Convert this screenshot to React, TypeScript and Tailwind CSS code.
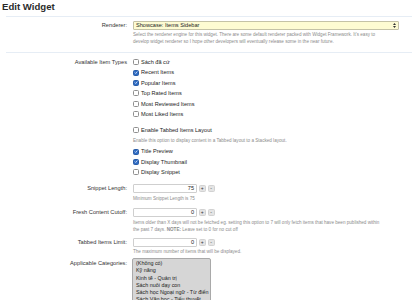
import React from "react";

const font = { fontFamily: '"Liberation Sans", Arial, sans-serif' };

function Box({ checked }: { checked?: boolean }) {
  return checked ? (
    <span className="w-[6px] h-[6px] rounded-[1.5px] bg-[#2f6cc4] border border-[#2a5ca6] flex items-center justify-center shrink-0">
      <svg width="5" height="5" viewBox="0 0 10 10">
        <path d="M2 5.2 L4.2 7.4 L8.2 2.6" stroke="white" strokeWidth="1.8" fill="none" />
      </svg>
    </span>
  ) : (
    <span className="w-[6px] h-[6px] rounded-[1.5px] bg-white border border-[#8f8f8f] shrink-0" />
  );
}

function CheckRow({ label, checked }: { label: string; checked?: boolean }) {
  return (
    <div className="h-[10.4px] flex items-center gap-[2px] text-[5.6px] text-[#222]">
      <Box checked={checked} />
      <span>{label}</span>
    </div>
  );
}

function Label({ children, className = "" }: { children: React.ReactNode; className?: string }) {
  return (
    <div className={"w-[127px] shrink-0 text-right text-[5.7px] text-[#333] " + className}>{children}</div>
  );
}

function Help({ children, className = "" }: { children: React.ReactNode; className?: string }) {
  return <div className={"text-[4.6px] leading-[7px] text-[#8c8c8c] " + className}>{children}</div>;
}

function Spin({ value }: { value: string }) {
  return (
    <div className="flex items-center gap-[2px]">
      <div className="w-[64px] h-[9px] bg-white border border-[#cfcfcf] rounded-[1px] flex items-center justify-end pr-[2px] text-[5.6px] text-[#222]">
        {value}
      </div>
      <div className="w-[6.5px] h-[7px] bg-[#e4e4e4] border border-[#d2d2d2] rounded-[1.5px] flex items-center justify-center text-[5px] leading-none text-[#333]">
        +
      </div>
      <div className="w-[7px] h-[7px] bg-[#e4e4e4] border border-[#d2d2d2] rounded-[1.5px] flex items-center justify-center text-[5px] leading-none text-[#333]">
        -
      </div>
    </div>
  );
}

export default function App() {
  return (
    <div className="w-[418px] h-[300px] overflow-hidden bg-white" style={font}>
      <div className="pl-[2px] pt-[1px] h-[12px] text-[9.6px] leading-[12px] font-bold text-[#2b2b2b]">Edit Widget</div>
      <div className="mt-[4px] mx-[6px] h-px bg-[#e6edf5]" />

      {/* Renderer */}
      <div className="mt-[4px] flex">
        <Label className="leading-[9px]">Renderer:</Label>
        <div className="ml-[6px] w-[266px]">
          <div className="h-[8.5px] bg-[#fdfbd2] border border-[#c4c2a6] rounded-[1px] flex items-center justify-between pl-[2px] pr-[2px] text-[5.6px] text-[#222]">
            <span>Showcase: Items Sidebar</span>
            <svg width="3" height="5" viewBox="0 0 6 10">
              <path d="M0 4 L3 0 L6 4 Z M0 6 L3 10 L6 6 Z" fill="#333" />
            </svg>
          </div>
          <Help className="mt-[1px]">
            Select the renderer engine for this widget. There are some default renderer packed with Widget Framework. It's easy to
            <br />
            develop widget renderer so I hope other developers will eventually release some in the near future.
          </Help>
        </div>
      </div>
      <div className="mt-[7px] mx-[6px] h-px bg-[#e6edf5]" />

      {/* Item types */}
      <div className="mt-[4.5px] flex">
        <Label className="leading-[10.4px]">Available Item Types</Label>
        <div className="ml-[6px]">
          <CheckRow label="Sách đã cứ" />
          <CheckRow label="Recent Items" checked />
          <CheckRow label="Popular Items" checked />
          <CheckRow label="Top Rated Items" />
          <CheckRow label="Most Reviewed Items" />
          <CheckRow label="Most Liked Items" />
          <div className="mt-[5.6px]">
            <CheckRow label="Enable Tabbed Items Layout" />
          </div>
          <Help className="mt-[2px]">Enable this option to display content in a Tabbed layout to a Stacked layout.</Help>
          <div className="mt-[2px]">
            <CheckRow label="Title Preview" checked />
            <CheckRow label="Display Thumbnail" checked />
            <CheckRow label="Display Snippet" />
          </div>
        </div>
      </div>

      {/* Snippet length */}
      <div className="mt-[6.5px] flex">
        <Label className="leading-[9px]">Snippet Length:</Label>
        <div className="ml-[6px]">
          <Spin value="75" />
          <Help className="mt-[1.5px]">Minimum Snippet Length is 75</Help>
        </div>
      </div>

      {/* Fresh content */}
      <div className="mt-[6.5px] flex">
        <Label className="leading-[9px]">Fresh Content Cutoff:</Label>
        <div className="ml-[6px]">
          <Spin value="0" />
          <Help className="mt-[1.5px]">
            Items older than X days will not be fetched eg. setting this option to 7 will only fetch items that have been published within
            <br />
            the past 7 days. <b className="font-bold">NOTE:</b> Leave set to 0 for no cut off
          </Help>
        </div>
      </div>

      {/* Tabbed items limit */}
      <div className="mt-[5px] flex">
        <Label className="leading-[9px]">Tabbed Items Limit:</Label>
        <div className="ml-[6px]">
          <Spin value="0" />
          <Help className="mt-[1.5px]">The maximum number of items that will be displayed.</Help>
        </div>
      </div>

      {/* Categories */}
      <div className="mt-[2.5px] flex">
        <Label className="pt-[2px] leading-[7.3px]">Applicable Categories:</Label>
        <div className="ml-[5px] w-[79px] h-[80px] bg-[#d6d6d6] border border-[#a9a9a9] rounded-[2px] pt-[1.5px] pl-[3px] text-[5.4px] leading-[7.3px] text-[#222] whitespace-nowrap overflow-hidden">
          <div>(Không có)</div>
          <div>Kỹ năng</div>
          <div>Kinh tế - Quản trị</div>
          <div>Sách nuôi dạy con</div>
          <div>Sách học Ngoại ngữ - Từ điển</div>
          <div>Sách Văn học - Tiểu thuyết</div>
          <div>Sách Thiếu nhi</div>
        </div>
      </div>
    </div>
  );
}
